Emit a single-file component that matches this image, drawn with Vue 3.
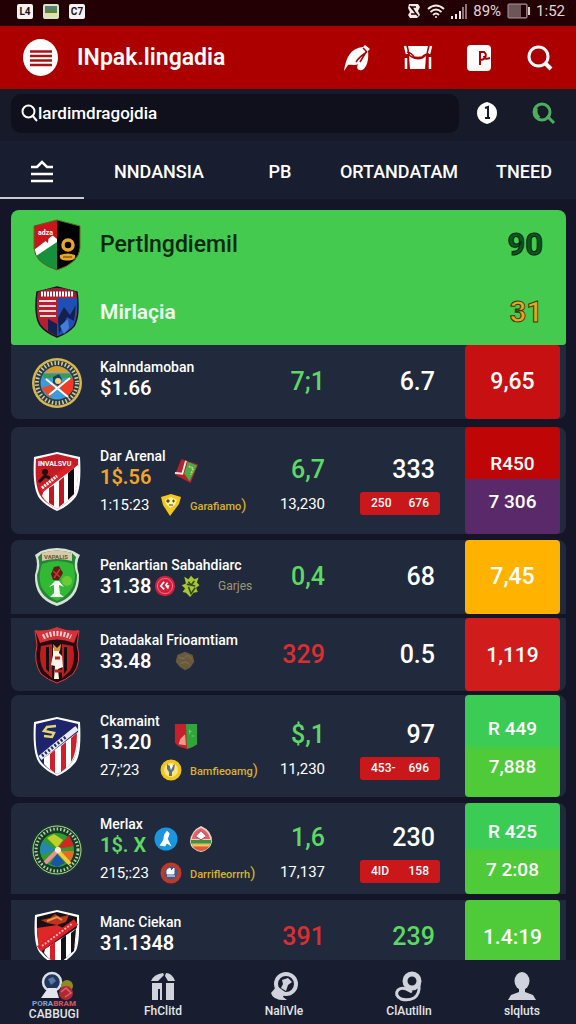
<template>
  <div class="app">
    <div class="status-bar">
      <div class="status-left">
        <span class="notice">L4</span>
        <span class="notice notice-photo"></span>
        <span class="notice">C7</span>
      </div>
      <div class="status-right">
        <svg width="14" height="16" viewBox="0 0 14 16">
          <path d="M2 1h9l2 3-2 4 2 4-3 3H3L1 12l2-3-2-4z" fill="#f3e9e9" />
          <path d="M9 4H5l4 7H4M3 3l8 10" stroke="#230003" stroke-width="1.3" fill="none" />
        </svg>
        <svg width="18" height="15" viewBox="0 0 18 15" fill="none" stroke="#f3e9e9" stroke-width="1.8">
          <path d="M1 5q8-7 16 0M3.5 8q5.500-5 11 0M6 11q3-3 6 0" />
          <circle cx="9" cy="13" r="1" fill="#f3e9e9" stroke="none" />
        </svg>
        <svg width="16" height="15" viewBox="0 0 16 15">
          <path d="M0 12h2v3H0zM4 10h2v5H4zM8 7h2v8H8z" fill="#f3e9e9" />
          <path d="M11 3h2v12h-2zM14 0h2v15h-2z" fill="#8d7577" />
        </svg>
        <span>89%</span>
        <svg width="23" height="16" viewBox="0 0 23 16">
          <rect x="1" y="1" width="19" height="14" rx="1" fill="#6d5658" stroke="#a89698" />
          <path d="M14 2h5v12h-5z" fill="#230003" />
          <path d="M21 4h2v8h-2z" fill="#d8cccc" />
        </svg>
        <span>1:52</span>
      </div>
    </div>

    <header class="header">
      <button type="button" class="menu-btn" aria-label="Menu">
        <svg width="22" height="16" viewBox="0 0 22 16" stroke="#a51518" stroke-width="2.500">
          <path d="M0 1.500h22M0 6h22M0 10.500h22M0 15h22" />
        </svg>
      </button>
      <h1 class="title">INpak.lingadia</h1>
      <button type="button" class="header-btn" aria-label="Boot">
        <svg width="28" height="28" viewBox="0 0 28 28">
          <path d="M1 27C3 13 8 4 20 3l2-2 5 4-2 2c1 8-1 17-6 19-4 1-6-2-4-6-3 2-8 0-10 1z" fill="#fff" />
          <path d="M20 4l4 4M24 8q-7 4-11 10M23 8l-6 10" stroke="#ac0000" stroke-width="1.500" fill="none" />
        </svg>
      </button>
      <button type="button" class="header-btn" aria-label="Inbox">
        <svg width="28" height="26" viewBox="0 0 28 26">
          <path d="M4 1h20l-2 9q-8 5-16 0zM5 11q10 7 17 0l-1 13H6z" fill="#fff" />
          <path d="M1 1l2 8M27 1l-2 8M2 13v11M26 12v12" stroke="#fff" stroke-width="2.500" />
          <path d="M3 7q5 1 7 5 4 1 8 0 3-3 7-3" stroke="#ac0000" stroke-width="1.500" fill="none" />
        </svg>
      </button>
      <button type="button" class="header-btn" aria-label="Page">
        <svg width="24" height="26" viewBox="0 0 24 26">
          <rect width="24" height="26" rx="4" fill="#fff" />
          <path d="M13 20V7h4q3 2 1 6-2 2-5 2M17 11q0 4 6 2" stroke="#ac0000" stroke-width="2" fill="none" />
        </svg>
      </button>
      <button type="button" class="header-btn" aria-label="Search">
        <svg width="26" height="26" viewBox="0 0 26 26" fill="none" stroke="#fff">
          <circle cx="11.500" cy="11.500" r="9.500" stroke-width="3" />
          <path d="M18 18l6 6" stroke-width="4" />
        </svg>
      </button>
    </header>

    <form class="search-row" @submit.prevent>
      <label class="search-box">
        <svg width="17" height="18" viewBox="0 0 17 18" fill="none" stroke="#fff" stroke-width="2">
          <circle cx="7.500" cy="7.500" r="6" />
          <path d="M11 11l5 6" />
        </svg>
        <input v-model="query" type="text" aria-label="Search" />
      </label>
      <button type="button" class="search-btn" aria-label="Info">
        <svg width="20" height="22" viewBox="0 0 20 22">
          <path d="M10 0l3 1q7 3 7 10t-7 10l-3 1-3-1Q0 18 0 11T7 1z" fill="#fff" />
          <path d="M8 6l3-1v11M8 16h5" stroke="#171a29" stroke-width="2" fill="none" />
        </svg>
      </button>
      <button type="submit" class="search-btn" aria-label="Find">
        <svg width="24" height="22" viewBox="0 0 24 22" fill="none" stroke="#4caf5c">
          <circle cx="11" cy="10" r="8" stroke-width="3" />
          <path d="M5 6q-2 6 3 10" stroke-width="4" />
          <path d="M16 14l7 7" stroke-width="3" />
        </svg>
      </button>
    </form>

    <nav class="tabs">
      <button type="button" class="tab active" aria-label="Sort">
        <svg width="24" height="24" viewBox="0 0 24 24" fill="none" stroke="#fff" stroke-width="2.500">
          <path d="M1 8h6l5-5 5 5h6M1 15h22M1 22h22" />
        </svg>
      </button>
      <button v-for="tab in tabs" :key="tab" type="button" class="tab">{{ tab }}</button>
    </nav>

    <main class="list">
      <section class="hero">
        <div class="hero-row dark">
          <svg class="crest" viewBox="0 0 48 60" v-html="crests.duo"></svg>
          <span class="hero-name">Pertlngdiemil</span>
          <span class="hero-score">90</span>
        </div>
        <div class="hero-row light">
          <svg class="crest" viewBox="0 0 48 60" v-html="crests.stripes"></svg>
          <span class="hero-name">Mirlaçia</span>
          <span class="hero-score">31</span>
        </div>
      </section>

      <article
        v-for="row in rows"
        :key="row.name"
        class="row"
        :class="[row.size, row.corners]"
      >
        <svg class="crest" viewBox="0 0 48 60" v-html="crests[row.crest]"></svg>
        <div class="info">
          <div class="name">{{ row.name }}</div>
          <div class="value-line" :class="row.marksAt">
            <span class="value" :class="row.valueColor">{{ row.value }}</span>
            <svg
              v-for="mark in row.marks"
              :key="mark"
              class="mark"
              viewBox="0 0 26 28"
              v-html="marks[mark]"
            ></svg>
            <span v-if="row.note" class="note">{{ row.note }}</span>
          </div>
          <div v-if="row.time" class="sub-line">
            <span class="time">{{ row.time }}</span>
            <svg class="sub-mark" viewBox="0 0 22 22" v-html="marks[row.subMark]"></svg>
            <span class="label">{{ row.label }}<i>)</i></span>
          </div>
        </div>
        <div class="stat">
          <span class="num" :class="row.firstColor">{{ row.first }}</span>
          <span v-if="row.firstSub" class="num-sub">{{ row.firstSub }}</span>
        </div>
        <div class="stat second">
          <span class="num" :class="row.secondColor">{{ row.second }}</span>
          <span v-if="row.chip" class="chip">
            <span v-for="c in row.chip" :key="c">{{ c }}</span>
          </span>
        </div>
        <div class="badge" :class="row.badgeColor">
          <span v-for="b in row.badge" :key="b">{{ b }}</span>
        </div>
      </article>
    </main>

    <nav class="bottom-nav">
      <a v-for="item in navItems" :key="item.label" href="#" class="nav-item" @click.prevent>
        <svg class="nav-icon" viewBox="0 0 30 28" v-html="item.icon"></svg>
        <span v-if="item.over" class="nav-over">{{ item.over[0] }}<b>{{ item.over[1] }}</b></span>
        <span class="nav-label">{{ item.label }}</span>
      </a>
    </nav>
  </div>
</template>

<script setup>
import { ref } from "vue";

const query = ref("lardimdragojdia");

const tabs = ["NNDANSIA", "PB", "ORTANDATAM", "TNEED"];

// club crests, 48x60
const crests = {
  duo: `
    <path d="M24 5l23 6v22q-1 15-23 22Q2 48 1 33V11z" fill="#000"/>
    <path d="M24 5v50Q2 48 1 33V11z" fill="#c9151c"/>
    <path d="M24 17v20L4 42 1 35z" fill="#fff"/>
    <path d="M24 27v28Q8 50 3 41z" fill="#15913b"/>
    <path d="M11 25l5-6-1 9zM19 20l5-8v12z" fill="#c9151c"/>
    <text x="5" y="20" font-size="7" font-weight="700" fill="#fff">adza</text>
    <circle cx="35" cy="30" r="5" fill="none" stroke="#e8a52e" stroke-width="3.500"/>
    <path d="M27 40q8-3 15 0 1 4-3 5-5 1-9 0-4-1-3-5z" fill="#e8a52e"/>
    <path d="M30 42h9" stroke="#5b3c08"/>
    <path d="M24 5l23 6v22q-1 15-23 22Q2 48 1 33V11z" fill="none" stroke="#5d6a20" stroke-width="1"/>`,
  stripes: `
    <path d="M24 5l20 5q3 24-3 34-6 7-17 11Q12 50 7 43 1 33 4 10z" fill="#b5202f" stroke="#151329" stroke-width="1.500"/>
    <path d="M24 16h20q1 20-4 28-6 7-16 10z" fill="#1f4fb4"/>
    <path d="M6 19h17M6 24h17M6 29h17M7 34h16" stroke="#fbd9dc" stroke-width="2"/>
    <path d="M15 37l9 5v12l-9-5zM31 25l6 8 6-10-2 16-7-4-8 17-1-16z" fill="#14204f"/>
    <path d="M27 44l8-7 1 9-5 6z" fill="#437dd9"/>
    <path d="M5 10q19-8 38 0v6q-19-6-38 0z" fill="#9c2033"/>
    <path d="M8 12h33" stroke="#fff" stroke-width="5" stroke-dasharray="2 1"/>`,
  wheel: `
    <circle cx="24" cy="31" r="25" fill="#d8b650"/>
    <circle cx="24" cy="31" r="22.500" fill="#293b42"/>
    <circle cx="24" cy="31" r="20" fill="none" stroke="#d4c9a0" stroke-width="4" stroke-dasharray="1.500 2"/>
    <circle cx="24" cy="31" r="16.500" fill="#3d9bdb"/>
    <path d="M11 21q13-14 26 0z" fill="#d79c31"/>
    <path d="M10 22h28v4H10z" fill="#3b9b54"/>
    <path d="M40 26v12l-6 7-10-13z" fill="#ef3c22"/>
    <path d="M8 36l16-5-7 15z" fill="#e64d2e"/>
    <path d="M16 43l21-17M13 27l22 18" stroke="#fff" stroke-width="2"/>
    <path d="M20 25l6-3 3 5-4 7-5-3z" fill="#16405f"/>
    <circle cx="25" cy="29" r="3" fill="#efd678"/>`,
  arsenal: `
    <path d="M24 1l23 5q2 35-6 42-7 8-17 12Q13 55 7 48-1 39 1 6z" fill="#fff"/>
    <path d="M24 3l21 5q1 30-6 39-6 6-15 11Q14 53 9 47 1 38 3 8z" fill="#c51b24"/>
    <path d="M11 39l34-25q1 24-6 33-6 6-15 11Q14 53 9 45z" fill="#fff"/>
    <path d="M16 37l5-3v21l-5-3zM26 30l5-4v26l-5 4z" fill="#bd1822"/>
    <path d="M35 22l6-5v26l-6 6z" fill="#0d0b12"/>
    <path d="M8 39l32-25" stroke="#db2129" stroke-width="6"/>
    <path d="M9 37l15-12" stroke="#fff" stroke-width="3" stroke-dasharray="2 1"/>
    <circle cx="12" cy="21" r="3" fill="#1b1013"/>
    <path d="M6 31l6-6 5 2" stroke="#1b1013" stroke-width="3" fill="none"/>
    <text x="5" y="15" font-size="7" font-weight="700" fill="#fff">INVALSVU</text>`,
  green: `
    <path d="M8 4q16-6 32 0l7 4q-5 8-1 20 1 24-22 31Q1 52 2 28 6 16 2 8z" fill="#d8e4d2"/>
    <path d="M9 6q15-5 30 0l4 4q-3 8 1 18 0 22-20 28Q4 50 4 28 8 18 5 10z" fill="#27823a"/>
    <path d="M9 17q15-6 31 0 4 12 0 22-5 10-16 15Q13 49 8 39q-3-10 1-22z" fill="#31b834"/>
    <path d="M9 6q15-5 30 0v8q-15-4-30 0z" fill="#d5cba9"/>
    <text x="11" y="12" font-size="6" font-weight="700" fill="#6f5439">VAPALIS</text>
    <circle cx="34" cy="34" r="5" fill="#6ccb35"/>
    <path d="M18 27l3-7 5-1 4 7-4 7h-6z" fill="#5a2018"/>
    <path d="M20 24l7 6M27 22l-6 9" stroke="#d83123" stroke-width="1.500" fill="none"/>
    <path d="M22 34h4l5 6-5-2 1 9 4 3H17l4-4v-8l-5 2z" fill="#f7fff2"/>`,
  warrior: `
    <path d="M2 6q10 2 22-3 12 5 22 3l-2 14q5 17-4 29-7 6-16 9-9-3-16-9-8-12-4-29z" fill="#230b10" stroke="#e43a41" stroke-width="1"/>
    <path d="M8 21q-3 16 3 25l8 7V19zM40 21q3 16-3 25l-8 7V19z" fill="#bd1c20"/>
    <path d="M13 22h3v25l-3-3zM31 22h3v23l-3 4z" fill="#120e11"/>
    <path d="M2 5q10 2 22-3 12 5 22 3l-5 13q-17-7-34 0z" fill="#d63137"/>
    <path d="M10 12q14-7 28 0" stroke="#ffd0d0" stroke-width="5" stroke-dasharray="2 1.500" fill="none"/>
    <path d="M20 22l3 3 4-3-1 6 3 3 1 11-5 2 1 10h-5l1-13-4-1 2-10z" fill="#fff5e7"/>
    <path d="M20 19l4 4 4-4-1 7h-6z" fill="#d99b33"/>
    <path d="M22 33h5M22 46h7" stroke="#c91b22" stroke-width="3"/>`,
  atletico: `
    <path d="M24 1l23 5q2 35-6 42-7 8-17 12Q13 55 7 48-1 39 1 6z" fill="#fff"/>
    <path d="M24 3l21 5q1 29-6 38-6 8-15 12Q14 53 9 47 1 38 3 8z" fill="#1d246b"/>
    <path d="M11 42l34-26q1 21-6 30-6 8-15 12-8-4-13-10z" fill="#fff"/>
    <path d="M17 38l5-4v23l-5-4zM28 30l5-4v26l-5 4zM38 22l6-5q0 20-6 29z" fill="#d0202c"/>
    <path d="M7 42l37-30" stroke="#e9ebf6" stroke-width="5"/>
    <path d="M9 40l25-20" stroke="#262966" stroke-width="3" stroke-dasharray="2 2"/>
    <path d="M23 10l-9 1-3 4 10 2-2 4-8-1" stroke="#e5d668" stroke-width="2.500" fill="none"/>`,
  compass: `
    <circle cx="24" cy="31" r="26" fill="#153d28"/>
    <circle cx="24" cy="31" r="24" fill="none" stroke="#c2d2a0" stroke-width="1"/>
    <circle cx="24" cy="31" r="21" fill="none" stroke="#b9d0a8" stroke-width="3" stroke-dasharray="1.500 2"/>
    <circle cx="24" cy="31" r="17" fill="#2f9b31"/>
    <path d="M10 22l12 9-14 5q-2-8 2-14z" fill="#2584b8"/>
    <path d="M14 19l7-4 9 6-6 8z" fill="#c0cf2c"/>
    <path d="M24 30l12-14 5 11z" fill="#d62422"/>
    <path d="M24 32h17q-1 8-5 12z" fill="#df6d23"/>
    <path d="M17 45l7-10 8 9-8 4z" fill="#1b53a9"/>
    <path d="M12 44l12-12" stroke="#ef8d99" stroke-width="4"/>
    <path d="M25 32l12 13" stroke="#f1cb3b" stroke-width="4"/>
    <circle cx="25" cy="31" r="3" fill="#fff0dd"/>`,
  sash: `
    <path d="M24 3l22 5q1 31-4 37-7 9-18 13Q13 54 7 46 0 38 2 8z" fill="#fff"/>
    <path d="M24 5l20 5q0 26-4 34-6 8-16 12Q14 52 9 45 3 37 4 10z" fill="#151114"/>
    <path d="M4 21l20-3 8 4L6 43z" fill="#dd2827"/>
    <path d="M12 42l32-21q0 14-4 23-6 8-16 12-8-3-13-10z" fill="#fff"/>
    <path d="M17 39l5-4v21l-5-4z" fill="#d72028"/>
    <path d="M28 32l5-4v23l-5 4zM38 26l5-4-2 22-3 2z" fill="#141217"/>
    <path d="M6 42l37-27" stroke="#dd1f28" stroke-width="7"/>
    <path d="M9 39l31-23" stroke="#ffb5b5" stroke-width="2" stroke-dasharray="2 1.500"/>
    <path d="M8 13l9-2 5-4 5 3 9-2-3 7-9 3-10-2z" fill="#bc3422"/>
    <path d="M14 14l10-4 5 3" stroke="#e19a3c" stroke-width="2" fill="none"/>`,
};

// small marks beside the figures
const marks = {
  flag: `
    <path d="M8 1l18 6-8 20L1 18z" fill="#b4222a"/>
    <path d="M15 4l10 4-8 17-6-8z" fill="#4da845"/>
    <path d="M13 3l-4 14-8-1" stroke="#f3eeee" stroke-width="2" fill="none"/>
    <path d="M16 9l5 2-3 7" stroke="#b0d777" stroke-width="2" fill="none" stroke-dasharray="2 1"/>`,
  roundRed: `
    <circle cx="13" cy="14" r="12" fill="#d41d3d"/>
    <circle cx="13" cy="14" r="9" fill="none" stroke="#f28193" stroke-width="1"/>
    <path d="M12 9l-4 5 4 4M16 10l-2 3 3 4M15 14h3" stroke="#fff" stroke-width="2" fill="none"/>`,
  leaf: `
    <path d="M5 3l5 3 3-4 4 4 5-2-2 6 3 3-4 3 2 5-5 1-4 5-5-5-4-1 3-4-4-4 5-2z" fill="#a6c72d"/>
    <path d="M10 9l3 4 4-5M10 15l3 8 5-7M8 12l10 2" stroke="#33461f" stroke-width="1.800" fill="none"/>`,
  stone: `
    <path d="M4 7l9-4 9 4 2 8-5 7-6 3-6-4-5-6z" fill="#685a3d"/>
    <path d="M6 10l6 1 4-4 5 5M8 17l6-2 4 3" stroke="#8b7954" stroke-width="1" fill="none"/>`,
  shieldDuo: `
    <path d="M1 1h24v22q-5 4-11 5Q4 26 1 21z" fill="#c5202c"/>
    <path d="M13 1h12v22q-5 4-11 5z" fill="#2fa53c"/>
    <path d="M5 23l2-6 5-5 1 12z" fill="#f19a83"/>
    <path d="M16 9h3M19 14h3M17 7v5" stroke="#76d06b" stroke-width="1"/>`,
  roundBlue: `
    <circle cx="13" cy="14" r="12.500" fill="#1996de"/>
    <path d="M14 5l3 3-2 6 4 8-5-3-2 3-6-1 4-6 1-6z" fill="#fff"/>`,
  rose: `
    <path d="M13 0q12 5 12 17-2 9-12 11Q2 26 1 17 2 5 13 0z" fill="#e9d9c1"/>
    <path d="M13 2q8 3 10 12H3Q4 5 13 2z" fill="#e36171"/>
    <path d="M7 11l6-6 6 6-6 4z" fill="#fff" stroke="#c52640"/>
    <path d="M2 15h22v4H2z" fill="#468d43"/>
    <path d="M3 20h20q-3 7-10 7T3 20z" fill="#dd5940"/>
    <path d="M4 21h18" stroke="#eed43f" stroke-width="2"/>`,
  goldTri: `
    <path d="M1 3l10-3 10 3-2 7-9 12L3 11z" fill="#f2c71e"/>
    <path d="M5 6l6-3 6 3-2 5-5 3-4-4z" fill="#fff1a0"/>
    <path d="M7 6h2v2H7zM13 6h1v2h-1zM9 11h4" fill="#5b4b0e" stroke="#5b4b0e"/>`,
  goldRound: `
    <circle cx="11" cy="11" r="10.500" fill="#f2c51d"/>
    <circle cx="11" cy="11" r="7" fill="#f8e583"/>
    <path d="M7 5l4 3 4-3-1 6-2 2v4h-3v-4l-2-3z" fill="#5f7284"/>
    <path d="M11 5l2 2-2 4-1-3z" fill="#fff"/>`,
  rustRound: `
    <circle cx="11" cy="11" r="10.500" fill="#bd3928"/>
    <circle cx="11" cy="11" r="6.500" fill="#3a5a95"/>
    <path d="M7 8l3-2 1 3 3-3v6H7zM7 14h8" fill="#fff" stroke="#fff" stroke-width="1"/>`,
};

const rows = [
  {
    name: "Kalnndamoban", value: "$1.66", crest: "wheel", size: "compact", corners: "bottom",
    first: "7;1", firstColor: "green", second: "6.7", badge: ["9,65"], badgeColor: "red",
  },
  {
    name: "Dar Arenal", value: "1$.56", valueColor: "gold", crest: "arsenal", size: "tall first-tall", corners: "all",
    marks: ["flag"], marksAt: "far lifted", time: "1:15:23", subMark: "goldTri", label: "Garafiamo",
    first: "6,7", firstColor: "green", firstSub: "13,230", second: "333", chip: ["250", "676"],
    badge: ["R450", "7 306"], badgeColor: "red-purple",
  },
  {
    name: "Penkartian Sabahdiarc", value: "31.38", crest: "green", size: "compact", corners: "top",
    marks: ["roundRed", "leaf"], marksAt: "near", note: "Garjes",
    first: "0,4", firstColor: "green", second: "68", badge: ["7,45"], badgeColor: "amber",
  },
  {
    name: "Datadakal Frioamtiam", value: "33.48", crest: "warrior", size: "compact low", corners: "bottom",
    marks: ["stone"], marksAt: "far",
    first: "329", firstColor: "crimson", second: "0.5", badge: ["1,119"], badgeColor: "scarlet",
  },
  {
    name: "Ckamaint", value: "13.20", crest: "atletico", size: "tall", corners: "all",
    marks: ["shieldDuo"], marksAt: "far lifted", time: "27;'23", subMark: "goldRound", label: "Bamfieoamg",
    first: "$,1", firstColor: "green", firstSub: "11,230", second: "97", chip: ["453-", "696"],
    badge: ["R 449", "7,888"], badgeColor: "greens",
  },
  {
    name: "Merlax", value: "1$. X", valueColor: "green", crest: "compass", size: "tall short-tall", corners: "top",
    marks: ["roundBlue", "rose"], marksAt: "near lifted", time: "215;:23", subMark: "rustRound", label: "Darrifleorrrh",
    first: "1,6", firstColor: "green", firstSub: "17,137", second: "230", chip: ["4ID", "158"],
    badge: ["R 425", "7 2:08"], badgeColor: "greens",
  },
  {
    name: "Manc Ciekan", value: "31.1348", crest: "sash", size: "compact low", corners: "",
    first: "391", firstColor: "crimson", second: "239", secondColor: "green", badge: ["1.4:19"], badgeColor: "lime",
  },
];

const navItems = [
  {
    label: "CABBUGI",
    over: ["PORA", "BRAM"],
    icon: `
      <circle cx="13" cy="10" r="9" fill="#22355d" stroke="#dbe0e8" stroke-width="2.500"/>
      <path d="M9 16h8l3 10H2z" fill="#e4e6ec"/>
      <path d="M9 7l5-2 3 4-5 4z" fill="#5879a3"/>
      <circle cx="28" cy="14" r="6" fill="#8d8b22"/>
      <circle cx="27" cy="21" r="7" fill="#b12835"/>
      <path d="M22 20l5-4 5 5-6 4" stroke="#e4606c" stroke-width="1.500" fill="none"/>`,
  },
  {
    label: "FhClitd",
    icon: `
      <path d="M3 9q3-7 12-8l1 2-6 6zM18 1q6 0 9 8h-7l-3-5z" fill="#d0d3dc"/>
      <path d="M4 11h10v17H4zM18 11h8v17h-8z" fill="#d0d3dc"/>
      <path d="M11 17v11" stroke="#1a2032" stroke-width="2"/>`,
  },
  {
    label: "NaliVle",
    icon: `
      <circle cx="17" cy="12" r="10" fill="none" stroke="#d0d3dc" stroke-width="4"/>
      <path d="M13 8l6-2 4 4-4 3-2 6-5-3 2-4zM8 14l8 6-2 5 4 3q-14 1-16-7z" fill="#d0d3dc"/>`,
  },
  {
    label: "ClAutilin",
    icon: `
      <circle cx="18" cy="9" r="7" fill="none" stroke="#d0d3dc" stroke-width="5"/>
      <path d="M25 13q1 9-5 13-6 3-13 1-7-4-3-9 4-3 8-1l6 3" fill="none" stroke="#d0d3dc" stroke-width="3"/>`,
  },
  {
    label: "slqluts",
    icon: `
      <ellipse cx="15" cy="9" rx="7.500" ry="9" fill="#d0d3dc"/>
      <path d="M12 16h6v4l8 3 3 5H1l3-5 8-3z" fill="#d0d3dc"/>`,
  },
];
</script>

<style>
body {
  background: #141627;
}
</style>

<style scoped>
.app {
  display: flex;
  flex-direction: column;
  height: 100vh;
  background: #141627;
  color: #fff;
  font-family: Roboto, "Liberation Sans", sans-serif;
}
button {
  padding: 0;
  border: none;
  background: none;
  color: inherit;
  font: inherit;
  display: flex;
  align-items: center;
  justify-content: center;
}
svg {
  flex: none;
  overflow: visible;
}

/* Status bar */
.status-bar {
  display: flex;
  justify-content: space-between;
  align-items: center;
  height: 26px;
  padding: 0 11px 0 17px;
  background: #230003;
  box-sizing: border-box;
}
.status-left {
  display: flex;
  gap: 10px;
  padding-bottom: 4px;
}
.notice {
  width: 16px;
  height: 15px;
  border-radius: 2px;
  background: #f8f3f3;
  color: #1d1215;
  font-size: 10px;
  line-height: 15px;
  font-weight: 700;
  text-align: center;
}
.notice-photo {
  background: linear-gradient(#4f8290, #68802f 60%, #dce3a9 60%);
  border: 2px solid #dbe3c7;
  box-sizing: border-box;
}
.status-right {
  display: flex;
  align-items: center;
  gap: 6px;
  padding-bottom: 4px;
  color: #e2d6d7;
  font-size: 15px;
}

/* Header */
.header {
  display: flex;
  align-items: center;
  height: 63px;
  padding: 0 6px 0 23px;
  background: #ac0000;
  box-sizing: border-box;
}
.menu-btn {
  width: 35px;
  height: 37px;
  border-radius: 50%;
  background: #fff;
}
.title {
  flex: 1;
  margin: 0 0 0 19px;
  font-size: 23px;
  font-weight: 600;
}
.header-btn {
  width: 61px;
  height: 48px;
}

/* Search */
.search-row {
  display: flex;
  align-items: center;
  height: 52px;
  padding: 0 5px 4px 11px;
  background: #171a29;
  box-sizing: border-box;
}
.search-box {
  flex: 1;
  display: flex;
  align-items: center;
  height: 39px;
  padding-left: 10px;
  border-radius: 10px;
  background: #0f101b;
}
.search-box input {
  flex: 1;
  min-width: 0;
  padding: 0;
  border: none;
  outline: none;
  background: none;
  color: #fff;
  font: 500 17px Roboto, "Liberation Sans", sans-serif;
}
.search-btn {
  width: 56px;
  height: 40px;
}

/* Tabs */
.tabs {
  display: grid;
  grid-template-columns: 84px 150fr 92fr 146fr 104fr;
  height: 58px;
  background: #181e30;
}
.tab {
  padding-top: 4px;
  border-bottom: 2px solid transparent;
  font-size: 18px;
  font-weight: 500;
}
.tab.active {
  border-bottom-color: #c7cad3;
}

/* List */
.list {
  flex: 1;
  min-height: 0;
  overflow: hidden;
  display: flex;
  flex-direction: column;
  gap: 4px;
  padding: 11px 10px 0 11px;
}
.hero {
  flex: none;
  margin-bottom: -4px;
  padding-top: 1px;
  border-radius: 8px 8px 3px 3px;
  background: #45ca50;
}
.hero-row {
  display: flex;
  align-items: center;
  height: 67px;
  padding-right: 23px;
}
.crest {
  width: 48px;
  height: 60px;
  margin: 0 19px 0 22px;
  align-self: center;
}
.hero-name {
  flex: 1;
  font-size: 23px;
  font-weight: 500;
}
.hero-score {
  font-size: 31px;
  font-weight: 700;
}
.dark {
  color: #04280b;
}
.dark .hero-score {
  color: #0a541f;
  -webkit-text-stroke: 1px #04280b;
}
.light .hero-name {
  font-size: 21px;
  font-weight: 600;
  color: #effff0;
}
.light .hero-score {
  font-size: 29px;
  color: #eba51c;
  -webkit-text-stroke: 1px #3c3a0c;
}

.row {
  flex: none;
  display: grid;
  grid-template-columns: 89px 1fr 64px 140px 95px;
  align-items: center;
  padding-right: 6px;
  background: #212a3d;
}
.row.bottom {
  border-radius: 0 0 8px 8px;
}
.row.top {
  border-radius: 8px 8px 0 0;
}
.row.all {
  border-radius: 8px;
}
.compact {
  min-height: 74px;
}
.compact.low {
  min-height: 73px;
}
.tall {
  min-height: 102px;
  margin-bottom: 2px;
}
.first-tall {
  min-height: 107px;
}
.short-tall {
  min-height: 91px;
}
.hero + .row {
  margin-bottom: 4px;
}

.info {
  min-width: 0;
  white-space: nowrap;
}
.compact .info {
  padding-bottom: 6px;
}
.compact.top .info {
  padding-bottom: 0;
}
.name {
  font-size: 14px;
  line-height: 18px;
  font-weight: 500;
}
.value-line {
  display: flex;
  align-items: center;
  height: 24px;
}
.value {
  font-size: 20px;
  line-height: 24px;
  font-weight: 600;
}
.near .value {
  min-width: 54px;
}
.far .value {
  min-width: 74px;
}
.mark {
  width: 22px;
  height: 24px;
  margin-right: 4px;
}
.lifted .mark {
  width: 24px;
  height: 28px;
  margin: 0 11px 12px 0;
}
.note {
  margin-left: 12px;
  color: #a09674;
  font-size: 12px;
}
.sub-line {
  display: flex;
  align-items: center;
  height: 20px;
  margin-top: 6px;
}
.time {
  min-width: 60px;
  font-size: 15px;
}
.sub-mark {
  width: 22px;
  height: 22px;
  margin-right: 8px;
}
.label {
  color: #d9b32d;
  font-size: 11px;
  font-weight: 500;
}
.label i {
  font-style: normal;
  font-size: 15px;
  font-weight: 400;
}

.stat {
  display: flex;
  flex-direction: column;
  align-items: flex-end;
}
.tall .stat {
  padding-top: 8px;
}
.num {
  font-size: 25px;
  line-height: 30px;
  font-weight: 500;
}
.num-sub {
  margin-top: 8px;
  font-size: 15px;
  line-height: 22px;
}
.second {
  padding-right: 25px;
}
.second .num {
  margin-right: 5px;
}
.chip {
  display: flex;
  justify-content: space-between;
  width: 80px;
  margin-top: 7px;
  padding: 0 11px;
  border-radius: 3px;
  background: #c9171b;
  box-sizing: border-box;
  font-size: 12px;
  line-height: 23px;
  font-weight: 500;
}

.badge {
  align-self: stretch;
  display: flex;
  flex-direction: column;
  justify-content: center;
  border-radius: 4px;
  text-align: center;
  font-size: 23px;
  line-height: 26px;
  font-weight: 500;
}
.tall .badge {
  gap: 12px;
  padding-top: 4px;
  font-size: 19px;
}
.low .badge {
  font-size: 21px;
}
.red {
  background: #c61012;
}
.scarlet {
  background: #d01c1b;
}
.amber {
  background: #ffb300;
}
.lime {
  background: #4fcb39;
}
.greens {
  background: linear-gradient(#3bcc56 48%, #4fca39 54%);
}
.red-purple {
  background: linear-gradient(#bf0506 49%, #59296a 49%);
}
.green {
  color: #5cd962;
}
.gold {
  color: #efa62a;
}
.crimson {
  color: #dc2e31;
}

/* Bottom navigation */
.bottom-nav {
  display: grid;
  grid-template-columns: 108fr 110fr 132fr 118fr 108fr;
  height: 64px;
  background: #181e2f;
}
.nav-item {
  display: flex;
  flex-direction: column;
  align-items: center;
  padding-top: 12px;
  color: #e3e5eb;
  text-decoration: none;
}
.nav-icon {
  width: 30px;
  height: 28px;
}
.nav-label {
  margin-top: 3px;
  font-size: 12px;
  line-height: 16px;
  font-weight: 500;
}
.nav-over {
  color: #7da4dd;
  font-size: 8px;
  line-height: 8px;
  font-weight: 700;
}
.nav-over b {
  color: #d34d5b;
}
.nav-over + .nav-label {
  margin-top: 0;
  line-height: 12px;
}
</style>
